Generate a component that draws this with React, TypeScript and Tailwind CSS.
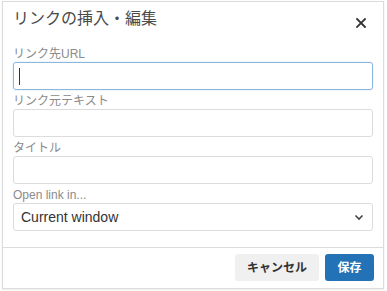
import React from "react";

const font = { fontFamily: '"Liberation Sans", "Noto Sans CJK JP", sans-serif' };

function Field({ label, children }: { label: string; children: React.ReactNode }) {
  return (
    <div className="flex flex-col">
      <div className="h-[19px] flex items-end">
        <span className="text-[12px] leading-[16px] text-[#8a8a8a]">{label}</span>
      </div>
      {children}
    </div>
  );
}

export default function App() {
  return (
    <div className="w-[387px] h-[291px] bg-white pl-[2px] pt-[1px]" style={font}>
      <div className="w-[382px] h-[288px] border border-[#dcdcdc] bg-white flex flex-col shadow-[0_1px_2px_rgba(0,0,0,0.08)]">
        <div className="h-[41px] flex items-start justify-between px-[10px] pt-[6px]">
          <span className="text-[16px] leading-[22px] text-[#4a4a4a]">リンクの挿入・編集</span>
          <svg width="10" height="10" viewBox="0 0 10 10" className="mt-[10px] mr-[7px]">
            <path d="M1 1 L9 9 M9 1 L1 9" stroke="#333" strokeWidth="1.8" strokeLinecap="square" />
          </svg>
        </div>
        <div className="flex flex-col px-[10px]">
          <Field label="リンク先URL">
            <div className="h-[28px] rounded-[3px] border border-[#8db6da] shadow-[0_0_2px_rgba(100,160,210,0.35)] flex items-center pl-[5px]">
              <span className="w-px h-[17px] bg-[#333]" />
            </div>
          </Field>
          <Field label="リンク元テキスト">
            <div className="h-[28px] rounded-[3px] border border-[#dcdcdc]" />
          </Field>
          <Field label="タイトル">
            <div className="h-[28px] rounded-[3px] border border-[#dcdcdc]" />
          </Field>
          <Field label="Open link in...">
            <div className="h-[28px] rounded-[3px] border border-[#dcdcdc] flex items-center justify-between pl-[7px] pr-[8px]">
              <span className="text-[14px] text-[#333]">Current window</span>
              <svg width="10" height="7" viewBox="0 0 10 7">
                <path d="M1.5 1.5 L5 5 L8.5 1.5" stroke="#444" strokeWidth="1.6" fill="none" />
              </svg>
            </div>
          </Field>
        </div>
        <div className="mt-[16px] border-t border-[#dcdcdc] flex justify-end gap-[6px] px-[9px] pt-[6px]">
          <button className="h-[27px] w-[84px] rounded-[3px] bg-[#f0f0f0] text-[12px] font-bold text-[#333]">キャンセル</button>
          <button className="h-[27px] w-[49px] rounded-[3px] bg-[#2472b6] text-[12px] font-bold text-white">保存</button>
        </div>
      </div>
    </div>
  );
}
